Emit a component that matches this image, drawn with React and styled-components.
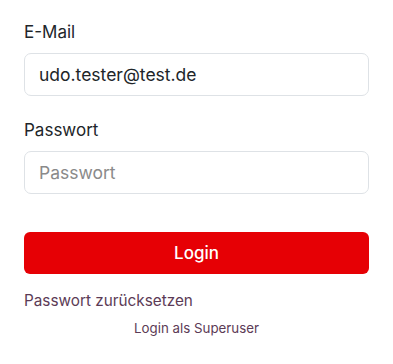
import React from 'react';
import styled, { createGlobalStyle } from 'styled-components';

const GlobalStyle = createGlobalStyle`
  body {
    margin: 0;
    background: #fff;
    font-family: Inter, "Liberation Sans", sans-serif;
    color: #212529;
  }
`;

const Form = styled.form`
  width: 345px;
  margin: 0 24px;
  padding-top: 20px;
  display: flex;
  flex-direction: column;
`;

const Field = styled.div`
  display: flex;
  flex-direction: column;
  margin-bottom: 22px;
`;

const Label = styled.label`
  font-size: 17px;
  line-height: 24px;
  margin-bottom: 9px;
`;

const Input = styled.input`
  box-sizing: border-box;
  height: 43px;
  padding: 0 14px;
  border: 1px solid #dee2e6;
  border-radius: 7px;
  font-family: inherit;
  font-size: 17.5px;
  color: #212529;
  outline: none;
  &::placeholder {
    color: #8a8a8a;
  }
`;

const Button = styled.button`
  margin-top: 16px;
  height: 42px;
  border: none;
  border-radius: 6px;
  background: #e60005;
  color: #fff;
  font-family: inherit;
  font-size: 17px;
  font-weight: 500;
`;

const Link = styled.a`
  color: #5c3b56;
  text-decoration: none;
  font-size: ${(p) => (p.$small ? '13.3px' : '15.3px')};
  align-self: ${(p) => (p.$center ? 'center' : 'flex-start')};
  margin-top: ${(p) => (p.$center ? '10px' : '17px')};
`;

export default function App() {
  return (
    <>
      <GlobalStyle />
      <Form onSubmit={(e) => e.preventDefault()}>
        <Field>
          <Label>E-Mail</Label>
          <Input type="email" defaultValue="udo.tester@test.de" />
        </Field>
        <Field>
          <Label>Passwort</Label>
          <Input type="password" placeholder="Passwort" />
        </Field>
        <Button type="submit">Login</Button>
        <Link href="#">Passwort zurücksetzen</Link>
        <Link href="#" $small $center>
          Login als Superuser
        </Link>
      </Form>
    </>
  );
}
